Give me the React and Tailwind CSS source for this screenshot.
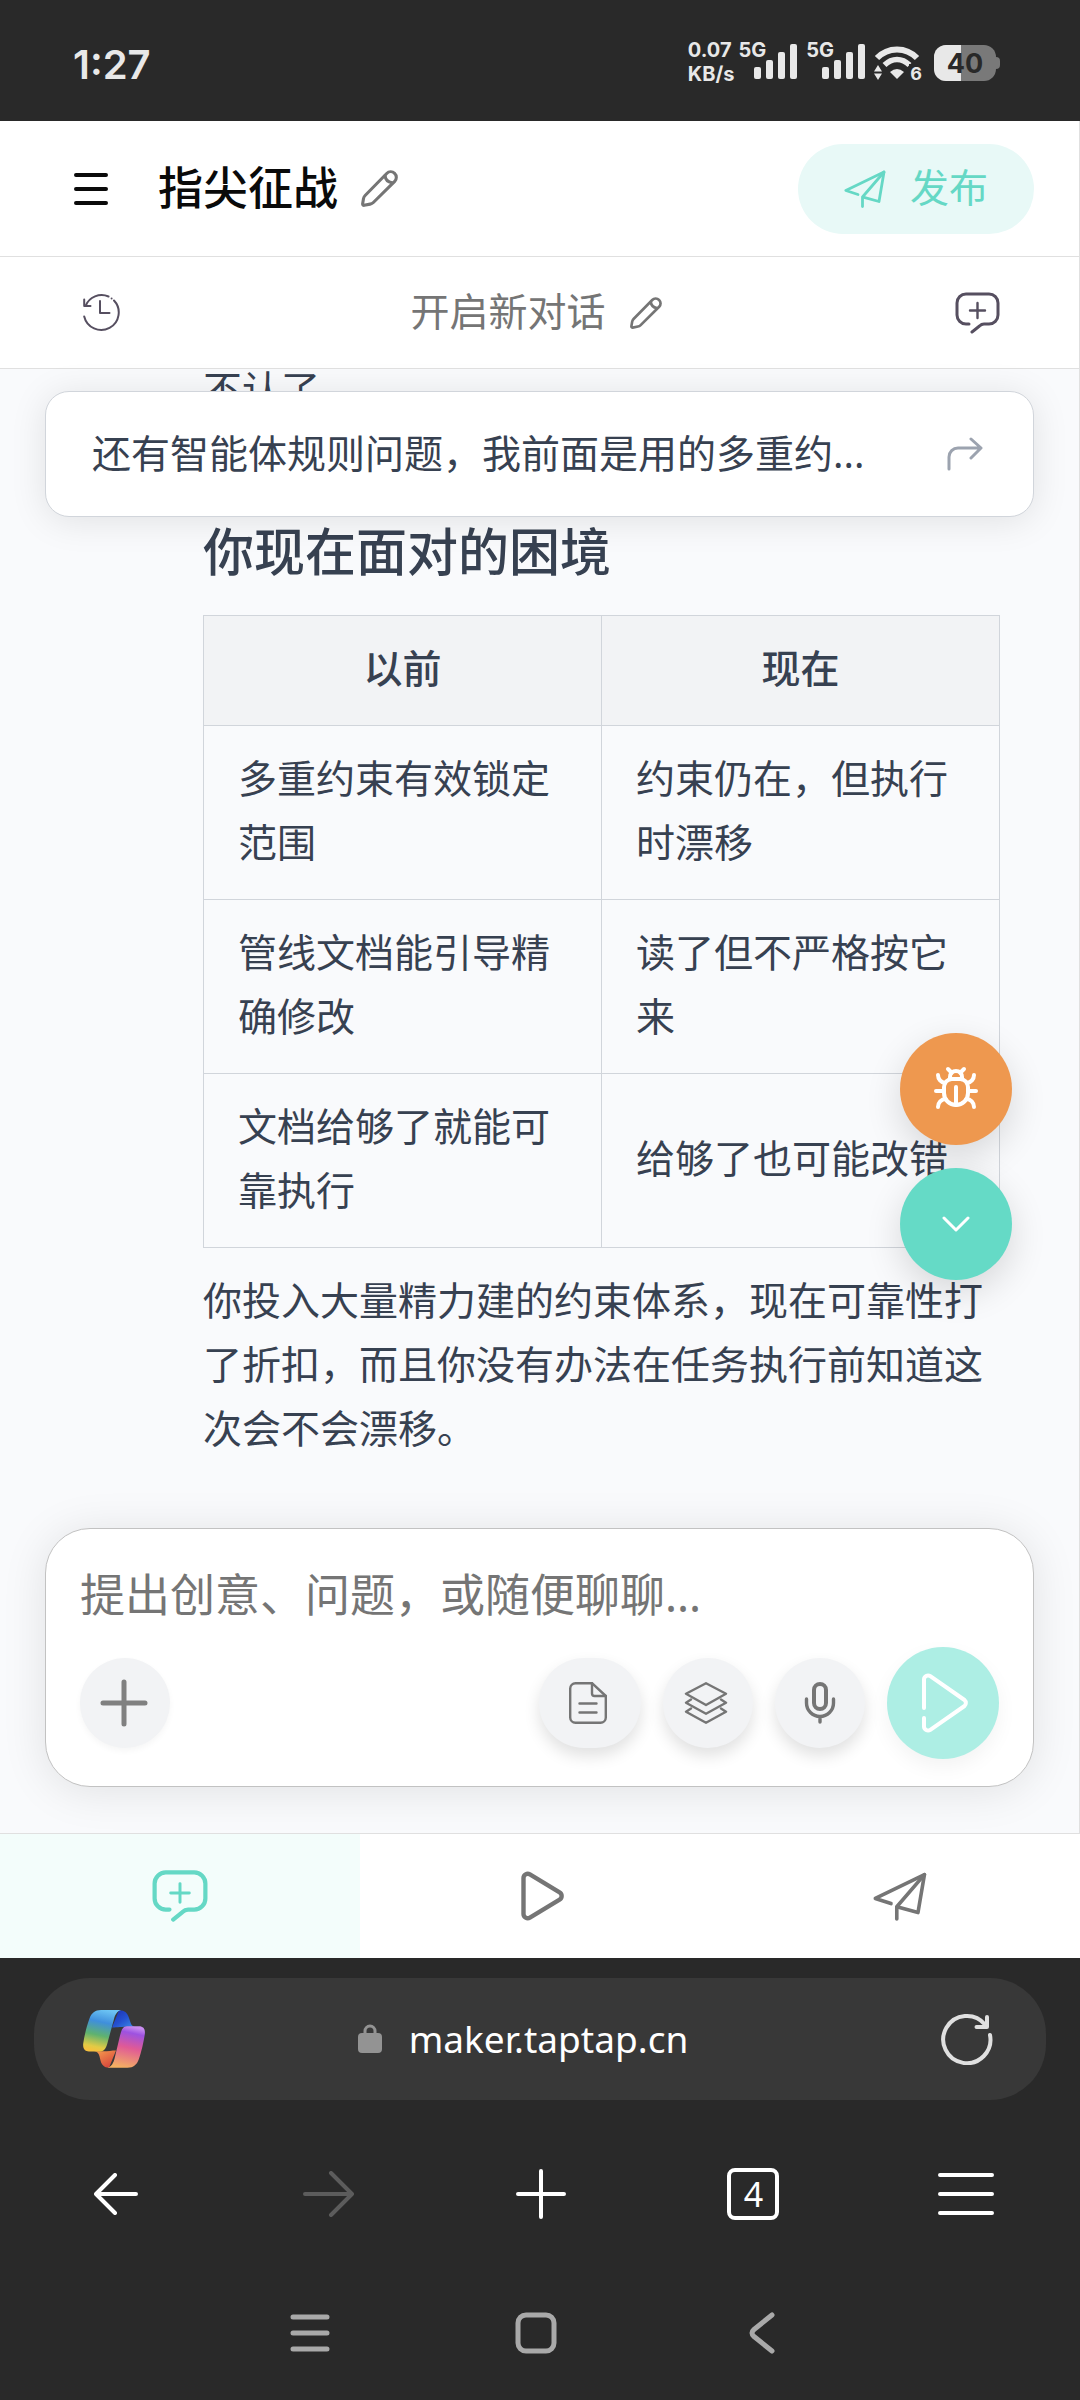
import { useState } from "react";
import { Bug } from "lucide-react";

const rows = [
  ["多重约束有效锁定范围", "约束仍在，但执行时漂移"],
  ["管线文档能引导精确修改", "读了但不严格按它来"],
  ["文档给够了就能可靠执行", "给够了也可能改错"],
];

function Icon({ w, h, stroke = 3, className = "", children }) {
  return (
    <svg
      width={w}
      height={h}
      viewBox={`0 0 ${w} ${h}`}
      fill="none"
      stroke="currentColor"
      strokeWidth={stroke}
      strokeLinecap="round"
      strokeLinejoin="round"
      className={`shrink-0 ${className}`}
      aria-hidden="true"
    >
      {children}
    </svg>
  );
}

function PencilIcon({ size }) {
  return (
    <svg
      width={size}
      height={size}
      viewBox="0 0 36 36"
      fill="none"
      stroke="currentColor"
      strokeWidth="3"
      strokeLinecap="round"
      strokeLinejoin="round"
      className="shrink-0"
      aria-hidden="true"
    >
      <path d="M3 34.4c-1 0-1.5-.6-1.4-1.6l.8-4.8c.2-1.3.7-2.3 1.6-3.2L25 3.4a5.4 5.4 0 0 1 7.8 7.6L12 31.6c-.9.9-1.900 1.400-3.100 1.600z" />
      <path d="M23.4 5.6c.4 3.6 3 6.2 6.800 6.800" />
    </svg>
  );
}

function ChatPlusIcon({ w, h, stroke }) {
  return (
    <svg
      width={w}
      height={h}
      viewBox="0 0 45 42"
      fill="none"
      stroke="currentColor"
      strokeWidth={stroke}
      strokeLinecap="round"
      strokeLinejoin="round"
      className="shrink-0"
      aria-hidden="true"
    >
      <path d="M14 32h-3a9 9 0 0 1-9-9V11a9 9 0 0 1 9-9h23a9 9 0 0 1 9 9v12a9 9 0 0 1-9 9h-5q-2.500 0-4.500 2L17 40" />
      <path d="M22.500 11v15M15 18.500h15" strokeWidth="2.400" />
    </svg>
  );
}

function PlaneIcon({ w, h }) {
  return (
    <svg
      width={w}
      height={h}
      viewBox="0 0 42 38"
      fill="none"
      stroke="currentColor"
      strokeWidth="2.8"
      strokeLinecap="round"
      strokeLinejoin="round"
      className="shrink-0"
      aria-hidden="true"
    >
      <path d="M14 24.500L1.800 20.500 40 2l-5 29.500-15-4.200" />
      <path d="M40 2L18.500 27v9.500" />
    </svg>
  );
}

function Signal() {
  return (
    <div className="flex">
      <span className="text-xl leading-5">5G</span>
      <svg width="44" height="35" viewBox="0 0 44 35" fill="currentColor" className="mt-1 -ml-3 shrink-0" aria-hidden="true">
        <rect x="0" y="23" width="7" height="12" rx="2" />
        <rect x="12" y="16" width="7" height="19" rx="2" />
        <rect x="24" y="8" width="7" height="27" rx="2" />
        <rect x="36" y="0" width="7" height="35" rx="2" />
      </svg>
    </div>
  );
}

function StatusBar() {
  return (
    <div className="flex h-[121px] items-center justify-between bg-[#292929] pt-1 pr-20 pl-[73px] font-['Inter','Noto_Sans_CJK_SC',sans-serif] font-semibold text-[#e8e8e8]">
      <time className="pt-1 text-[40px]">1:27</time>
      <div className="flex items-center gap-2 font-bold">
        <div className="flex gap-1">
          <div className="text-xl leading-6">
            <div className="-mt-0.5">0.07</div>
            <div>KB/s</div>
          </div>
          <div className="flex gap-2">
            <Signal />
            <Signal />
          </div>
        </div>
        <div className="relative mr-1">
          <svg width="48" height="35" viewBox="0 0 48 35" fill="none" aria-hidden="true">
            <path d="M3 13C14 1.500 32 1.500 43 13" stroke="currentColor" strokeWidth="6" />
            <path d="M10.500 20C18 12.500 28 12.500 35.500 20" stroke="currentColor" strokeWidth="5.500" />
            <path d="M16 27q7-6 14 0l-7 7z" fill="currentColor" />
            <path d="M0 26.500l4-6.500 4 6.500zM0 28.500l4 6.500 4-6.500z" fill="currentColor" />
          </svg>
          <span className="absolute right-0 -bottom-1 bg-[#292929] pl-px text-lg leading-5">6</span>
        </div>
        <svg width="66" height="36" viewBox="0 0 66 36" aria-hidden="true">
          <defs>
            <clipPath id="level">
              <rect width="27" height="36" />
            </clipPath>
          </defs>
          <path d="M60 12h2a4 4 0 0 1 4 4v4a4 4 0 0 1-4 4h-2z" fill="#797979" />
          <rect width="62" height="36" rx="12" fill="#797979" />
          <rect width="62" height="36" rx="12" fill="#e8e8e8" clipPath="url(#level)" />
          <text x="31" y="28" textAnchor="middle" fontSize="27" fill="#292929">
            40
          </text>
        </svg>
      </div>
    </div>
  );
}

function AppHeader() {
  return (
    <>
      <header className="flex h-[136px] items-center border-b border-[#e0e0e0] bg-white pr-[45px] pl-[74px]">
        <button aria-label="菜单" className="text-[#0a0a0a]">
          <Icon w={34} h={32} stroke={4}>
            <path d="M2 2h30M2 16h30M2 30h30" />
          </Icon>
        </button>
        <h1 className="ml-[50px] pb-0.5 text-[45px] font-medium text-[#0a0a0a]">指尖征战</h1>
        <button aria-label="重命名项目" className="ml-[23px] text-[#757575]">
          <PencilIcon size={37} />
        </button>
        <button className="ml-auto flex h-[90px] items-center gap-6 rounded-full bg-[#e8f9f7] px-[46px] text-[39px] text-[#65d8c5]">
          <PlaneIcon w={42} h={38} />
          <span className="pb-0.5">发布</span>
        </button>
      </header>
      <div className="flex h-28 items-center justify-between border-b border-[#e0e0e0] bg-white pr-[79px] pl-[83px]">
        <button aria-label="历史记录" className="text-[#564f60]">
          <Icon w={38} h={38} stroke={2}>
            <path d="M2.500 12A17.500 17.500 0 0 1 25.500 2.500M28.600 4.400v.1M31 6.500A17.500 17.500 0 1 1 1.200 22.500" />
            <path d="M1.200 5.500V12h6.300M17 7v12h9.500" />
          </Icon>
        </button>
        <div className="flex items-center gap-6 pr-1 text-[#757575]">
          <h2 className="pb-0.5 text-[39px]">开启新对话</h2>
          <button aria-label="重命名对话">
            <PencilIcon size={32} />
          </button>
        </div>
        <button aria-label="新建对话" className="text-[#564f60]">
          <ChatPlusIcon w={45} h={42} stroke={3} />
        </button>
      </div>
    </>
  );
}

function Messages() {
  return (
    <section className="relative flex-1 text-[39px] leading-[64px] text-[#374151]">
      <div className="h-full overflow-hidden pr-[79px] pl-[203px]">
        <p className="-mt-3">不认了</p>
        <h3 className="mt-[92px] text-[51px] leading-[76px] font-medium">你现在面对的困境</h3>
        <table className="mt-[26px] w-full table-fixed border-collapse">
          <thead>
            <tr className="bg-[#f2f3f5]">
              <th className="border border-[#d1d5db] px-[34px] pt-5 pb-[25px] font-medium">以前</th>
              <th className="border border-[#d1d5db] px-[34px] pt-5 pb-[25px] font-medium">现在</th>
            </tr>
          </thead>
          <tbody>
            {rows.map(([before, now]) => (
              <tr key={before}>
                <td className="border border-[#d1d5db] px-[34px] pt-5 pb-[25px]">{before}</td>
                <td className="border border-[#d1d5db] px-[34px] pt-5 pb-[25px]">{now}</td>
              </tr>
            ))}
          </tbody>
        </table>
        <p className="mt-5">
          你投入大量精力建的约束体系，现在可靠性打了折扣，而且你没有办法在任务执行前知道这次会不会漂移。
        </p>
      </div>

      {/* pregunta fijada arriba */}
      <button className="absolute inset-x-[45px] top-[22px] flex h-[126px] items-center justify-between rounded-3xl border border-[#d1d5db] bg-white pr-[50px] pl-[46px] shadow-[0_4px_36px_rgba(0,0,0,0.1)]">
        <span className="pb-0.5">还有智能体规则问题，我前面是用的多重约...</span>
        <Icon w={36} h={34} className="text-[#9ca3af]">
          <path d="M2 32V20a9 9 0 0 1 9-9h22M24 2l10 9-10 10" />
        </Icon>
      </button>

      <div className="absolute right-[67px] bottom-[248px] flex flex-col gap-[23px] text-white">
        <button
          aria-label="报告问题"
          className="flex size-28 items-center justify-center rounded-full bg-[#ee984f] shadow-[0_12px_36px_rgba(0,0,0,0.14)]"
        >
          <Bug size={48} strokeWidth={2} />
        </button>
        <button
          aria-label="滚动到底部"
          className="flex size-28 items-center justify-center rounded-full bg-[#65dac6] shadow-[0_12px_36px_rgba(0,0,0,0.14)]"
        >
          <Icon w={28} h={16}>
            <path d="M2 2l12 12L26 2" />
          </Icon>
        </button>
      </div>
    </section>
  );
}

function Composer() {
  const [text, setText] = useState("");

  return (
    <form
      onSubmit={(e) => e.preventDefault()}
      className="mx-[45px] mb-[46px] rounded-[45px] border border-[#c2c2c2] bg-white px-[34px] pt-[39px] pb-[27px] shadow-[0_4px_45px_rgba(0,0,0,0.1)]"
    >
      <textarea
        rows={1}
        aria-label="消息"
        placeholder="提出创意、问题，或随便聊聊..."
        value={text}
        onChange={(e) => setText(e.target.value)}
        className="block h-[54px] w-full resize-none overflow-hidden text-[45px] leading-[54px] text-[#374151] outline-none placeholder:text-[#757575]"
      />
      <div className="mt-[25px] flex items-center gap-[22px] text-[#757575]">
        <button
          type="button"
          aria-label="添加"
          className="mr-auto flex size-[90px] items-center justify-center rounded-full bg-[#f2f3f5] pr-0.5 text-[#808080] shadow-[0_3px_6px_rgba(0,0,0,0.04)]"
        >
          <Icon w={48} h={48} stroke={5}>
            <path d="M24 3v42M3 24h42" />
          </Icon>
        </button>
        <button
          type="button"
          aria-label="文档"
          className="flex h-[90px] w-[102px] items-center justify-center rounded-full bg-[#f2f3f5] pr-1 shadow-[0_8px_16px_rgba(0,0,0,0.12)]"
        >
          <Icon w={38} h={42} stroke={2.4}>
            <path d="M23 1.200H6.500A5.300 5.300 0 0 0 1.200 6.500v29a5.300 5.300 0 0 0 5.300 5.300h25a5.300 5.300 0 0 0 5.300-5.300V14z" />
            <path d="M23 1.200v10.300a2.500 2.500 0 0 0 2.500 2.500H37M10.500 21.500h17M10.500 30.500h17" />
          </Icon>
        </button>
        <button
          type="button"
          aria-label="技能"
          className="flex size-[90px] items-center justify-center rounded-full bg-[#f2f3f5] pr-1 shadow-[0_8px_16px_rgba(0,0,0,0.12)]"
        >
          <Icon w={44} h={42} stroke={2.4}>
            <path d="M22 1.200l20 10.500-20 11.300L2 11.700z" />
            <path d="M7 17.500l-5 3.200 20 11 20-11-5-3.200M7 26.500l-5 3.200 20 11 20-11-5-3.200" />
          </Icon>
        </button>
        <button
          type="button"
          aria-label="语音输入"
          className="flex size-[90px] items-center justify-center rounded-full bg-[#f2f3f5] shadow-[0_8px_16px_rgba(0,0,0,0.12)]"
        >
          <Icon w={32} h={42} stroke={4}>
            <rect x="10" y="2" width="12" height="25" rx="6" />
            <path d="M2.500 17v4a13.500 13.500 0 0 0 27 0v-4M16 35v5" strokeWidth="3.400" />
          </Icon>
        </button>
        <button
          aria-label="发送"
          className="flex size-28 items-center justify-center rounded-full bg-[#adeee4] pl-1 text-white shadow-[0_8px_20px_rgba(0,0,0,0.05)]"
        >
          <Icon w={46} h={60} stroke={4}>
            <path d="M2 35V6.500a4 4 0 0 1 6.300-3.300L42.500 27a4 4 0 0 1 0 6L8.300 56.800A4 4 0 0 1 2 53.500V45" />
          </Icon>
        </button>
      </div>
    </form>
  );
}

function TabBar() {
  return (
    <nav className="grid h-[125px] grid-cols-3 border-t border-[#e0e0e0] bg-white text-[#757575]">
      <button aria-label="对话" className="flex items-center justify-center bg-[#f3fdfb] text-[#65d8c5]">
        <ChatPlusIcon w={56} h={52} stroke={3.4} />
      </button>
      <button aria-label="试玩" className="flex items-center justify-center pl-1">
        <Icon w={43} h={50} stroke={4.4}>
          <path d="M2.500 7a4.200 4.200 0 0 1 6.400-3.600l29.700 18a4.200 4.200 0 0 1 0 7.200L8.900 46.600A4.200 4.200 0 0 1 2.500 43z" />
        </Icon>
      </button>
      <button aria-label="发布" className="flex items-center justify-center">
        <PlaneIcon w={54} h={49} />
      </button>
    </nav>
  );
}

function CopilotLogo() {
  return (
    <svg width="62" height="58" viewBox="0 0 62 58" aria-hidden="true">
      <defs>
        <linearGradient id="cpA" x1="0.6" y1="0" x2="0.4" y2="1">
          <stop offset="0" stopColor="#6cc4f4" />
          <stop offset="0.3" stopColor="#3f8fdc" />
          <stop offset="0.62" stopColor="#5fb26f" />
          <stop offset="0.9" stopColor="#e2cb45" />
          <stop offset="1" stopColor="#f5c13e" />
        </linearGradient>
        <linearGradient id="cpB" x1="0" y1="0" x2="1" y2="1">
          <stop offset="0" stopColor="#1c2fae" />
          <stop offset="0.5" stopColor="#2450cf" />
          <stop offset="1" stopColor="#3c8de8" />
        </linearGradient>
        <linearGradient id="cpC" x1="0.6" y1="0" x2="0.4" y2="1">
          <stop offset="0" stopColor="#c88cf0" />
          <stop offset="0.15" stopColor="#9d52e0" />
          <stop offset="0.5" stopColor="#e05a96" />
          <stop offset="1" stopColor="#f4b062" />
        </linearGradient>
        <linearGradient id="cpD" x1="0" y1="0" x2="0.7" y2="1">
          <stop offset="0" stopColor="#f8a04e" />
          <stop offset="1" stopColor="#d6453c" />
        </linearGradient>
      </defs>
      <path d="M36 .3c6 0 8.500 3 10 7.700l1.500 4.500c.8 2.500 2 4 4.500 4.200H43c-5 0-12 .8-14 .8z" fill="url(#cpB)" />
      <path d="M26 57.700c-5 0-7.500-3-8.600-7.700l-1-4c-.7-2.700-2-4.300-5.400-4.700H20c5 0 9-.8 13-.8z" fill="url(#cpD)" />
      <path d="M18 0h20c-4 1-6 5-7 9l-6 22c-1.500 6-3 10.500-8 10.500H6C1.500 41.500-.5 38 .3 33 1.500 25 4 15 6.500 8.500 8.500 3 12 0 18 0z" fill="url(#cpA)" />
      <path d="M44 16.300h12c4.500 0 6.500 3 5.800 8-1.200 8-3.500 18-6 25-2 5.500-5.300 8.500-11.300 8.500h-20c4-1 6-5 7-9l5-21c1.500-6 2.500-11.500 7.500-11.500z" fill="url(#cpC)" />
    </svg>
  );
}

function BrowserBar() {
  return (
    <footer className="bg-[#292929] pt-5 text-white">
      <div className="mx-[34px] flex h-[122px] items-center rounded-[56px] bg-[#383838] pr-[53px] pl-[49px]">
        <button aria-label="Copilot">
          <CopilotLogo />
        </button>
        <div className="flex flex-1 justify-center pr-10">
          <a
            href="#"
            className="flex items-center gap-[27px] font-['Noto_Sans','Noto_Sans_CJK_SC',sans-serif] text-[37px]"
          >
            <svg width="24" height="30" viewBox="0 0 24 30" fill="none" aria-hidden="true">
              <path d="M7 11V7a5 5 0 0 1 10 0v4" stroke="#939393" strokeWidth="3" />
              <rect x="0" y="9" width="24" height="20" rx="4" fill="#939393" />
            </svg>
            maker.taptap.cn
          </a>
        </div>
        <button aria-label="刷新" className="text-[#e0e0e0]">
          <Icon w={52} h={52} stroke={4}>
            <path d="M49 22A23.600 23.600 0 1 1 44 11.500" />
            <path d="M46 4v10H35.500" />
          </Icon>
        </button>
      </div>

      <div className="mt-[34px] grid h-[120px] grid-cols-5 pr-2 pl-2.5">
        <button aria-label="后退" className="flex items-center justify-center">
          <Icon w={44} h={42} stroke={4}>
            <path d="M42 21H3M21 2L2 21l19 19" />
          </Icon>
        </button>
        <button aria-label="前进" disabled className="flex items-center justify-center text-[#5c5c5c]">
          <Icon w={52} h={46} stroke={4}>
            <path d="M2 23h47M28 2l21 21-21 21" />
          </Icon>
        </button>
        <button aria-label="新标签页" className="flex items-center justify-center">
          <Icon w={50} h={50} stroke={4}>
            <path d="M25 2v46M2 25h46" />
          </Icon>
        </button>
        <button aria-label="标签页" className="flex items-center justify-center">
          <span className="flex size-[52px] items-center justify-center rounded-lg border-4 border-white font-['Noto_Sans',sans-serif] text-[34px] leading-none">
            4
          </span>
        </button>
        <button aria-label="浏览器菜单" className="flex items-center justify-center">
          <Icon w={56} h={42} stroke={4}>
            <path d="M2 2h52M2 21h52M2 40h52" />
          </Icon>
        </button>
      </div>

      {/* botones del sistema */}
      <div className="flex h-[146px] items-center justify-center pt-3 pr-2 text-[#a9a9a9]">
        <button aria-label="最近任务" className="flex w-[226px] justify-center">
          <Icon w={40} h={40} stroke={5}>
            <path d="M3 4h34M3 20h34M3 36h34" />
          </Icon>
        </button>
        <button aria-label="主屏幕" className="flex w-[226px] justify-center">
          <Icon w={42} h={42} stroke={5}>
            <rect x="3" y="3" width="36" height="36" rx="8" />
          </Icon>
        </button>
        <button aria-label="返回" className="flex w-[226px] justify-center">
          <Icon w={26} h={42} stroke={5}>
            <path d="M23 3L5 17.500q-4 3.500 0 7L23 39" />
          </Icon>
        </button>
      </div>
    </footer>
  );
}

export default function App() {
  return (
    <div className="flex min-h-screen flex-col bg-[#f9fafc] font-['Noto_Sans','Noto_Sans_CJK_SC',sans-serif]">
      <StatusBar />
      <main className="flex flex-1 flex-col border-r border-[#e0e0e0]">
        <AppHeader />
        <Messages />
        <Composer />
      </main>
      <TabBar />
      <BrowserBar />
    </div>
  );
}
